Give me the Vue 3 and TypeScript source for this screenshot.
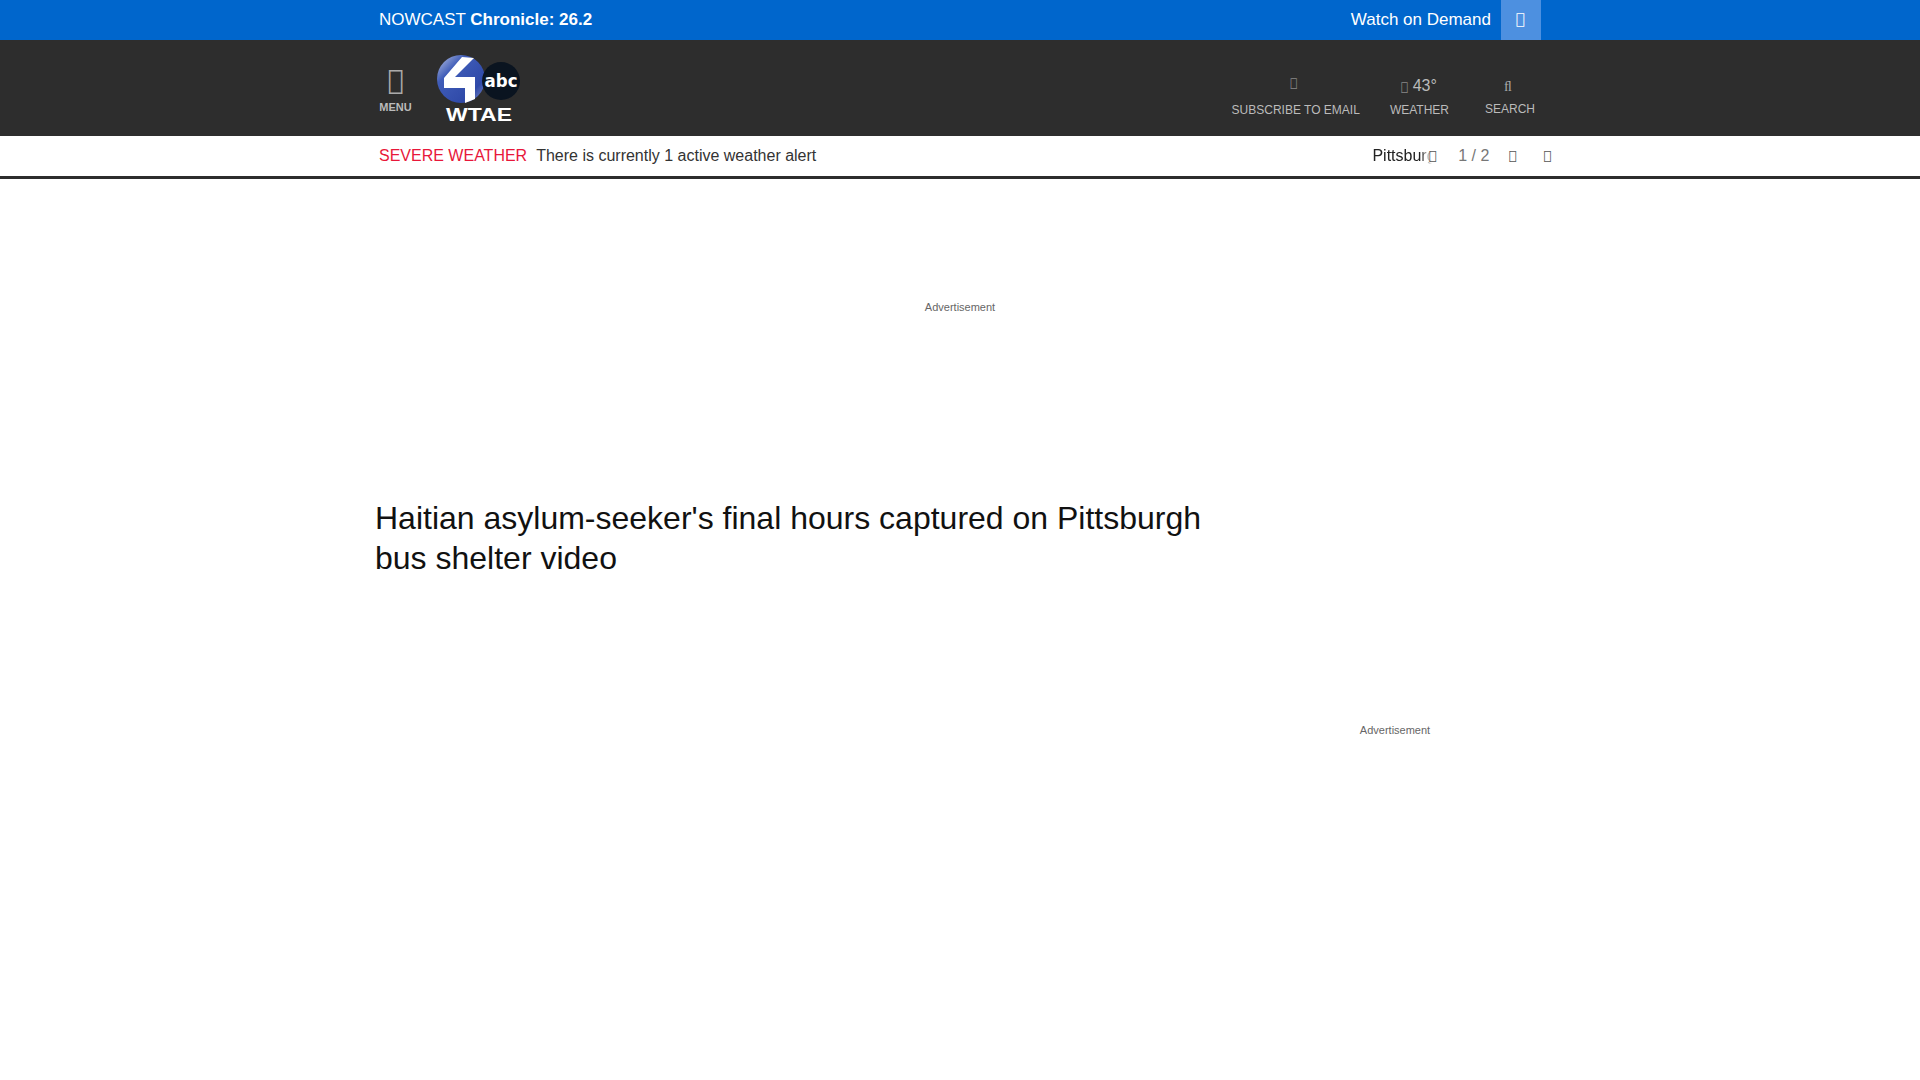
<script setup lang="ts">
// header glyphs come from an icon font that is not there, so they show as empty boxes
const icons = { menu: '\ue900', mail: '\ue901', sun: '\ue902', search: '\ufb02', play: '\ue903', pin: '\ue904', prev: '\ue905', next: '\ue906' }
</script>

<template>
  <div class="page">
    <div class="topbar">
      <div class="wrap topbar-in">
        <div class="nowcast">NOWCAST <b>Chronicle: 26.2</b></div>
        <div class="watch">
          <span>Watch on Demand</span>
          <button class="watch-btn"><span class="ico">{{ icons.play }}</span></button>
        </div>
      </div>
    </div>

    <header class="head">
      <div class="wrap head-in">
        <div class="menu">
          <span class="ico menu-ico">{{ icons.menu }}</span>
          <span class="menu-label">MENU</span>
        </div>
        <svg class="logo" width="84" height="70" viewBox="0 0 84 70">
          <defs>
            <linearGradient id="globe" x1="0" y1="0" x2="1" y2="1">
              <stop offset="0" stop-color="#c3cce6" />
              <stop offset="0.3" stop-color="#3f5cb8" />
              <stop offset="0.75" stop-color="#2f49a8" />
              <stop offset="1" stop-color="#8593c8" />
            </linearGradient>
          </defs>
          <circle cx="25" cy="25" r="24" fill="url(#globe)" />
          <path d="M26 3 L38 4 L19 23 H39 V45 L29 49 V34 H8 V24 Z" fill="#fff" />
          <circle cx="65" cy="27" r="19" fill="#0a1420" />
          <text class="abc" x="65" y="33" text-anchor="middle" textLength="33" lengthAdjust="spacingAndGlyphs">abc</text>
          <text class="wtae" x="43" y="67" text-anchor="middle" textLength="66" lengthAdjust="spacingAndGlyphs">WTAE</text>
        </svg>
        <div class="tools">
          <div class="tool tool-mail">
            <span class="ico tool-ico">{{ icons.mail }}</span>
            <span class="tool-label">SUBSCRIBE TO EMAIL</span>
          </div>
          <div class="tool tool-wx">
            <span class="temp"><i class="ico">{{ icons.sun }}</i> 43°</span>
            <span class="tool-label">WEATHER</span>
          </div>
          <div class="tool tool-search">
            <span class="search-ico">{{ icons.search }}</span>
            <span class="tool-label">SEARCH</span>
          </div>
        </div>
      </div>
    </header>

    <div class="alert">
      <div class="wrap alert-in">
        <span class="severe">SEVERE WEATHER</span>
        <span class="alert-text">There is currently 1 active weather alert</span>
        <div class="alert-right">
          <span class="city">Pittsburgh</span>
          <span class="ico box pin">{{ icons.pin }}</span>
          <span class="count">1 / 2</span>
          <span class="ico box prev">{{ icons.prev }}</span>
          <span class="ico box next">{{ icons.next }}</span>
        </div>
      </div>
    </div>

    <div class="ad-top">Advertisement</div>

    <main class="wrap main">
      <h1 class="title">Haitian asylum-seeker's final hours captured on Pittsburgh bus shelter video</h1>
      <aside class="side">Advertisement</aside>
    </main>
  </div>
</template>

<style scoped>
.page { font-family: "Liberation Sans", Arial, sans-serif; background: #fff; height: 1080px; overflow: hidden; }
.wrap { width: 1170px; margin: 0 auto; box-sizing: border-box; }
.ico { font-family: "DejaVu Sans", sans-serif; font-style: normal; }

.topbar { height: 40px; background: #0066cc; color: #fff; font-size: 17px; }
.topbar-in { display: flex; justify-content: space-between; align-items: center; height: 40px; padding: 0 4px; }
.watch { display: flex; align-items: center; gap: 10px; }
.watch-btn { width: 40px; height: 40px; border: 0; padding: 0 2px 2px 0; background: #4d90e0; color: #fff; font-size: 15px; }

.head { height: 96px; background: #2d2d2d; color: #bbb; }
.head-in { display: flex; height: 96px; padding-left: 4px; }
.menu { width: 33px; display: flex; flex-direction: column; align-items: center; padding-top: 24px; }
.menu-ico { font-size: 27px; line-height: 32px; color: #aaa; }
.menu-label { font-size: 11px; font-weight: 700; line-height: 14px; margin-top: 4px; color: #bbb; }
.logo { margin: 14px 0 0 24px; }
.abc { font: 700 17px "DejaVu Sans", sans-serif; fill: #fff; }
.wtae { font: 700 18px "Liberation Sans", sans-serif; fill: #fff; }

.tools { margin-left: auto; display: flex; margin-right: 10px; }
.tool { display: flex; flex-direction: column; align-items: center; }
.tool-label { font-size: 12px; line-height: 14px; color: #bbb; }
.tool-mail { padding-top: 35px; margin-right: 30px; }
.tool-ico { font-size: 12px; line-height: 16px; margin: 0 4px 12px 0; color: #888; }
.tool-wx { padding-top: 37px; margin-right: 36px; }
.temp { font-size: 16px; line-height: 18px; margin: 0 1px 7px 0; color: #bbb; }
.temp i { font-size: 12px; color: #888; }
.tool-search { padding-top: 40px; }
.search-ico { font-family: "Liberation Serif", serif; font-size: 14px; line-height: 14px; margin: 0 4px 8px 0; color: #aaa; }

.alert { height: 43px; border-bottom: 3px solid #2d2d2d; box-sizing: border-box; background: #fff; font-size: 16px; color: #333; }
.alert-in { display: flex; align-items: center; height: 40px; padding-left: 4px; }
.severe { color: #e8173a; margin-right: 9px; }
.alert-right { margin: 0 -6px 0 auto; display: flex; align-items: center; }
.city { width: 60px; overflow: hidden; white-space: nowrap; color: #222; -webkit-mask-image: linear-gradient(90deg, #000 80%, transparent); mask-image: linear-gradient(90deg, #000 80%, transparent); }
.box { font-size: 13px; color: #555; margin-top: -2px; }
.pin { margin: -2px 22px 0 -4px; }
.count { color: #777; }
.prev { margin-left: 19px; }
.next { margin-left: 27px; }

.ad-top { font-size: 11px; color: #666; text-align: center; margin-top: 121px; line-height: 14px; }

.main { display: flex; justify-content: space-between; }
.title { width: 850px; margin: 184px 0 0; font-size: 32px; line-height: 40px; font-weight: 400; color: #111; }
.side { width: 300px; margin: 0; padding-top: 409px; font-size: 11px; line-height: 14px; color: #666; text-align: center; }
</style>
